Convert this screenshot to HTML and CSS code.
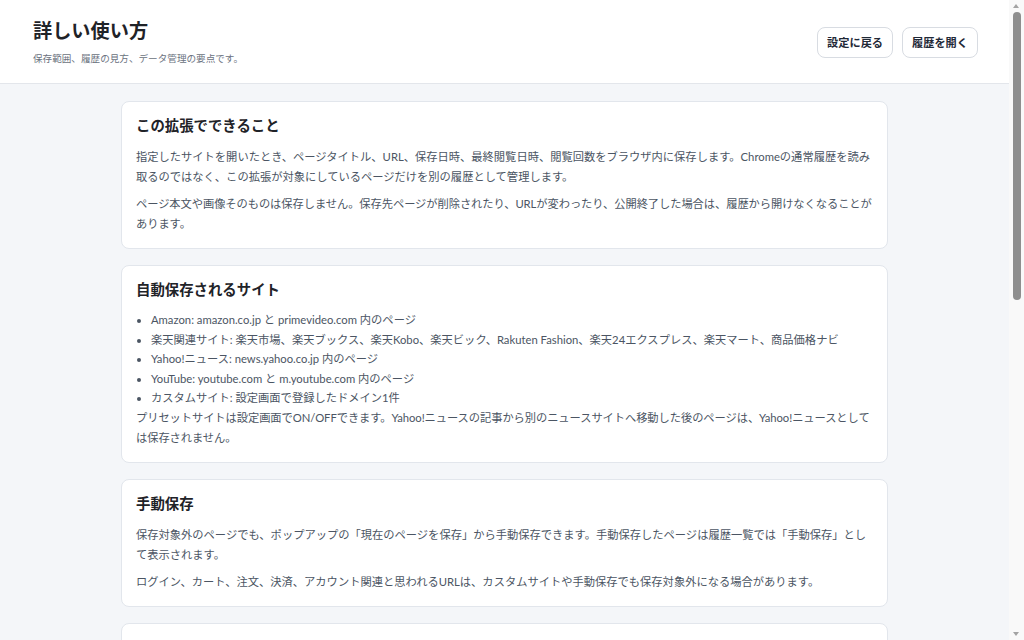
FILE: index.html
```html
<!DOCTYPE html>
<html lang="ja">
<head>
  <meta charset="UTF-8">
  <meta name="viewport" content="width=device-width, initial-scale=1">
  <title>詳しい使い方</title>
  <link rel="stylesheet" href="styles.css">
</head>
<body>
  <header class="page-header">
    <div class="page-title">
      <h1>詳しい使い方</h1>
      <p class="subtitle">保存範囲、履歴の見方、データ管理の要点です。</p>
    </div>
    <div class="header-actions">
      <button class="btn" type="button">設定に戻る</button>
      <button class="btn" type="button">履歴を開く</button>
    </div>
  </header>

  <main class="guide">
    <section class="card">
      <h2>この拡張でできること</h2>
      <p>指定したサイトを開いたとき、ページタイトル、URL、保存日時、最終閲覧日時、閲覧回数をブラウザ内に保存します。Chromeの通常履歴を読み取るのではなく、この拡張が対象にしているページだけを別の履歴として管理します。</p>
      <p class="fit">ページ本文や画像そのものは保存しません。保存先ページが削除されたり、URLが変わったり、公開終了した場合は、履歴から開けなくなることがあります。</p>
    </section>

    <section class="card">
      <h2>自動保存されるサイト</h2>
      <ul class="site-list">
        <li>Amazon: amazon.co.jp と primevideo.com 内のページ</li>
        <li>楽天関連サイト: 楽天市場、楽天ブックス、楽天Kobo、楽天ビック、Rakuten Fashion、楽天24エクスプレス、楽天マート、商品価格ナビ</li>
        <li>Yahoo!ニュース: news.yahoo.co.jp 内のページ</li>
        <li>YouTube: youtube.com と m.youtube.com 内のページ</li>
        <li>カスタムサイト: 設定画面で登録したドメイン1件</li>
      </ul>
      <p class="fit">プリセットサイトは設定画面でON/OFFできます。Yahoo!ニュースの記事から別のニュースサイトへ移動した後のページは、Yahoo!ニュースとしては保存されません。</p>
    </section>

    <section class="card">
      <h2>手動保存</h2>
      <p>保存対象外のページでも、ポップアップの「現在のページを保存」から手動保存できます。手動保存したページは履歴一覧では「手動保存」として表示されます。</p>
      <p>ログイン、カート、注文、決済、アカウント関連と思われるURLは、カスタムサイトや手動保存でも保存対象外になる場合があります。</p>
    </section>

    <section class="card">
      <h2>履歴画面の見方</h2>
      <p>履歴画面では、サイトごとの絞り込み、キーワード検索、並び替えができます。閲覧回数は同じURLを開いた回数で、最終閲覧日時は最後に開いた日時です。</p>
      <p>不要な履歴は1件ずつ削除できます。サイト単位でまとめて削除することもできます。</p>
    </section>

    <section class="card">
      <h2>データ管理</h2>
      <p>履歴はこのブラウザのローカルストレージにのみ保存され、外部のサーバーには送信されません。</p>
      <p>設定画面から履歴をJSON形式で書き出し、別の環境で読み込むことができます。拡張を削除すると保存した履歴も削除されるため、必要に応じて書き出しておいてください。</p>
    </section>

    <section class="card">
      <h2>困ったとき</h2>
      <p>保存されない場合は、設定画面で対象サイトがONになっているか確認してください。シークレットウィンドウでは、拡張の設定で許可していないと保存されません。</p>
    </section>
  </main>

  <!-- window scrollbar, as in the capture -->
  <div class="scrollbar" aria-hidden="true">
    <span class="scroll-arrow up"></span>
    <span class="scroll-thumb"></span>
    <span class="scroll-arrow down"></span>
  </div>
</body>
</html>
```

FILE: styles.css
```css
* {
  box-sizing: border-box;
}

body {
  margin: 0;
  padding-right: 15px;
  background-color: #f4f6f9;
  color: #1f2937;
  font-family: "Lato", "Noto Sans CJK JP", sans-serif;
}

.page-header {
  display: flex;
  justify-content: space-between;
  align-items: center;
  padding: 18px 31px 17px 33px;
  background-color: #fff;
  border-bottom: 1px solid #e3e6eb;
}

.page-title h1 {
  margin: 0 0 8px;
  font-size: 19.2px;
  line-height: 26px;
  font-weight: 700;
  color: #1f2328;
}

.subtitle {
  margin: 0;
  font-size: 9.6px;
  line-height: 14px;
  color: #6b7280;
}

.header-actions {
  display: flex;
  gap: 9px;
}

.btn {
  padding: 7px 9px;
  font-family: inherit;
  font-size: 11.2px;
  line-height: 15px;
  font-weight: 700;
  color: #1f2937;
  background-color: #fff;
  border: 1px solid #d8dce2;
  border-radius: 8px;
}

.guide {
  display: flex;
  flex-direction: column;
  gap: 16px;
  max-width: 767px;
  margin: 0 auto;
  padding: 17px 0 24px;
}

.card {
  padding: 14px;
  background-color: #fff;
  border: 1px solid #e2e6ec;
  border-radius: 8px;
}

.card h2 {
  margin: 0 0 11px;
  font-size: 14.4px;
  line-height: 20px;
  font-weight: 700;
  color: #1f2328;
}

.card p {
  margin: 0;
  font-size: 11.28px;
  line-height: 20px;
  color: #4b5563;
}

.card p + p {
  margin-top: 7px;
}

.card p.fit {
  letter-spacing: -0.07px;
}

.site-list {
  margin: 10px 0 0;
  padding-left: 15px;
  font-size: 11.28px;
  line-height: 19.6px;
  color: #4b5563;
}

.card h2 + .site-list {
  margin-top: -1px;
}

.scrollbar {
  position: fixed;
  top: 0;
  right: 0;
  width: 15px;
  height: 100vh;
  background-color: #f9f9f9;
}

.scroll-thumb {
  position: absolute;
  top: 12px;
  left: 4px;
  width: 8px;
  height: 288px;
  background-color: #8e8e8e;
  border-radius: 4px;
}

.scroll-arrow {
  position: absolute;
  left: 4px;
  width: 0;
  height: 0;
  border-left: 3.5px solid transparent;
  border-right: 3.5px solid transparent;
}

.scroll-arrow.up {
  top: 4px;
  border-bottom: 4px solid #a3a3a3;
}

.scroll-arrow.down {
  bottom: 4px;
  border-top: 4px solid #a3a3a3;
}
```
